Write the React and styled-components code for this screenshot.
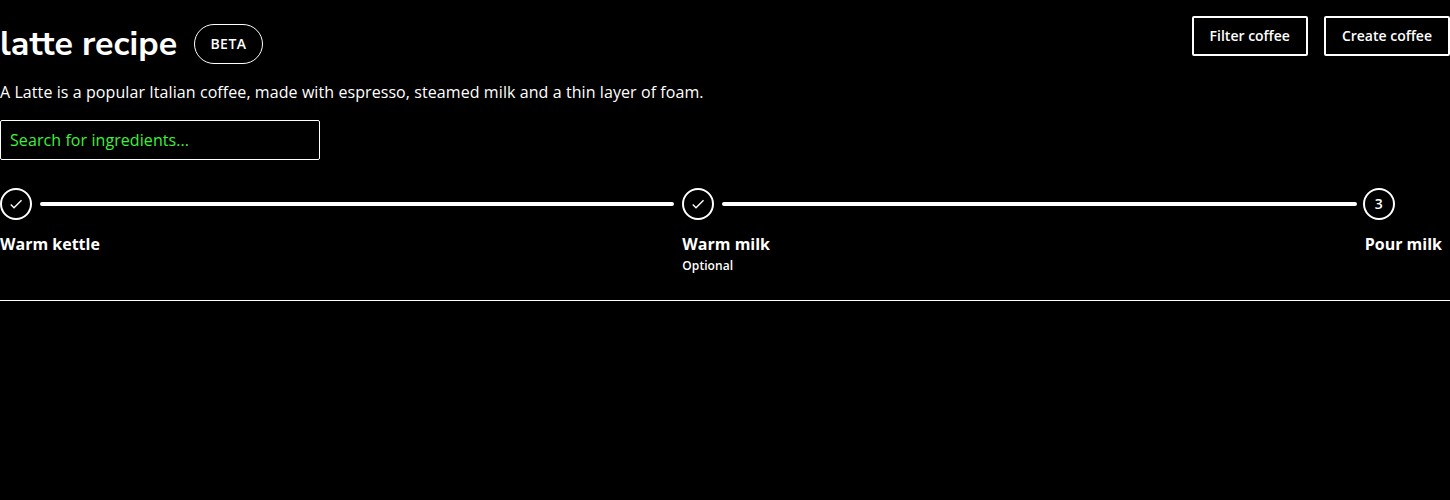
import React from "react";
import styled, { createGlobalStyle } from "styled-components";

const GlobalStyle = createGlobalStyle`
  * { box-sizing: border-box; }
  body {
    margin: 0;
    background: #000;
    color: #fff;
    font-family: "Open Sans", sans-serif;
    font-size: 16px;
    line-height: 24px;
  }
`;

const Page = styled.main`
  padding-top: 16px;
  border-bottom: 1px solid #fff;
  height: 301px;
`;

const Header = styled.header`
  display: flex;
  justify-content: space-between;
  align-items: flex-start;
`;

const TitleRow = styled.div`
  display: flex;
  align-items: center;
  padding-top: 8px;
  gap: 16px;
`;

const Title = styled.h1`
  margin: 0;
  width: 178px;
  white-space: nowrap;
  font-family: "Nunito Sans", Nunito, Lato, sans-serif;
  font-size: 34px;
  font-weight: 700;
  line-height: 40px;
`;

const Badge = styled.span`
  display: flex;
  align-items: center;
  justify-content: center;
  width: 69px;
  height: 40px;
  border: 1px solid #fff;
  border-radius: 20px;
  font-size: 14px;
  font-weight: 600;
  letter-spacing: 0.5px;
`;

const Actions = styled.div`
  display: flex;
  gap: 16px;
`;

const Button = styled.button`
  height: 40px;
  padding: 0 16px;
  border: 2px solid #fff;
  border-radius: 2px;
  background: transparent;
  color: #fff;
  font: 600 14px/20px "Open Sans", sans-serif;
`;

const Description = styled.p`
  margin: 16px 0;
  letter-spacing: 0.005em;
`;

const SearchInput = styled.input`
  display: block;
  width: 320px;
  height: 40px;
  padding: 0 9px;
  border: 1px solid #fff;
  border-radius: 2px;
  background: #000;
  color: #fff;
  font: 400 16px/24px "Open Sans", sans-serif;
  letter-spacing: 0.005em;
  &::placeholder { color: #3bf23b; opacity: 1; }
`;

const Steps = styled.ol`
  display: flex;
  list-style: none;
  margin: 28px 0 0;
  padding: 0;
`;

const Step = styled.li`
  flex: ${(p) => (p.$last ? "0 0 85.3px" : "1 1 0")};
`;

const Track = styled.div`
  display: flex;
  align-items: center;
  gap: 8px;
  padding-right: 8px;
  margin-left: ${(p) => (p.$last ? "-2px" : "0")};
`;

const Marker = styled.span`
  display: flex;
  flex: none;
  align-items: center;
  justify-content: center;
  width: 32px;
  height: 32px;
  border: 2px solid #fff;
  border-radius: 50%;
  font-size: 14px;
  font-weight: 600;
`;

const Line = styled.span`
  flex: 1;
  height: 4px;
  border-radius: 2px;
  background: #fff;
`;

const Label = styled.div`
  margin-top: 12px;
  font-weight: 700;
  white-space: nowrap;
`;

const Hint = styled.div`
  font-size: 12px;
  font-weight: 600;
  line-height: 20px;
  letter-spacing: 0.005em;
`;

const Check = () => (
  <svg width="16" height="16" viewBox="0 0 24 24" fill="#fff">
    <path d="M9 16.17 4.83 12l-1.42 1.41L9 19 21 7l-1.41-1.41z" />
  </svg>
);

const steps = [
  { label: "Warm kettle", done: true },
  { label: "Warm milk", hint: "Optional", done: true },
  { label: "Pour milk" },
];

export default function App() {
  return (
    <>
      <GlobalStyle />
      <Page>
        <Header>
          <TitleRow>
            <Title>latte recipe</Title>
            <Badge>BETA</Badge>
          </TitleRow>
          <Actions>
            <Button>Filter coffee</Button>
            <Button>Create coffee</Button>
          </Actions>
        </Header>
        <Description>
          A Latte is a popular Italian coffee, made with espresso, steamed milk and a thin layer of foam.
        </Description>
        <SearchInput placeholder="Search for ingredients..." />
        <Steps>
          {steps.map(({ label, hint, done }, i) => {
            const last = i === steps.length - 1;
            return (
              <Step key={label} $last={last}>
                <Track $last={last}>
                  <Marker>{done ? <Check /> : i + 1}</Marker>
                  {!last && <Line />}
                </Track>
                <Label>{label}</Label>
                {hint && <Hint>{hint}</Hint>}
              </Step>
            );
          })}
        </Steps>
      </Page>
    </>
  );
}
